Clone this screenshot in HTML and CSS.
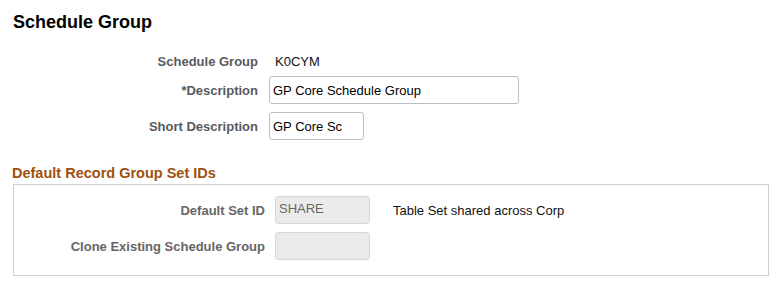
FILE: index.html
```html
<!DOCTYPE html>
<html>
<head>
    <meta charset="utf-8" />
    <title>Schedule Group</title>
    <link rel="stylesheet" href="styles.css">
</head>
<body>
    <div class="page">
        <h1 class="titel">Schedule Group</h1>

        <div class="urlap">
            <div class="sor sor-elso">
                <label class="cimke">Schedule Group</label>
                <span class="ertek">K0CYM</span>
            </div>
            <div class="sor">
                <label class="cimke" for="descr">*Description</label>
                <input id="descr" class="mezo mezo-hosszu" type="text" value="GP Core Schedule Group" />
            </div>
            <div class="sor sor-utolso">
                <label class="cimke" for="shortDescr">Short Description</label>
                <input id="shortDescr" class="mezo mezo-rovid" type="text" value="GP Core Sc" />
            </div>
        </div>

        <h2 class="alcim">Default Record Group Set IDs</h2>
        <div class="doboz">
            <div class="doboz-sor">
                <label class="cimke cimke-halvany">Default Set ID</label>
                <input class="mezo mezo-rovid tiltott" type="text" value="SHARE" disabled />
                <span class="leiras">Table Set shared across Corp</span>
            </div>
            <div class="doboz-sor">
                <label class="cimke cimke-halvany">Clone Existing Schedule Group</label>
                <input class="mezo mezo-rovid tiltott" type="text" value="" disabled />
                <span class="leiras"></span>
            </div>
        </div>
    </div>
</body>
</html>
```

FILE: styles.css
```css
* {
    margin: 0;
    padding: 0;
    box-sizing: border-box;
}

body {
    font-family: "Liberation Sans", Arial, sans-serif;
    font-size: 13px;
    color: #000;
    background: #fff;
}

.page {
    width: 782px;
    height: 289px;
    overflow: hidden;
}

.titel {
    font-size: 18px;
    line-height: 21px;
    font-weight: bold;
    margin: 12px 0 0 13px;
}

.urlap {
    margin-top: 17px;
}

.sor {
    display: grid;
    grid-template-columns: 258px auto;
    column-gap: 11px;
    align-items: center;
    height: 28px;
}

.sor-elso {
    height: 22px;
    margin-bottom: 4px;
}

.sor-utolso {
    margin-top: 8px;
}

.cimke {
    font-weight: bold;
    color: #575a5f;
    text-align: right;
    line-height: 15px;
}

.cimke-halvany {
    color: #666;
}

.ertek {
    padding-left: 6px;
    color: #111;
}

.mezo {
    height: 28px;
    border: 1px solid #b8bfc6;
    border-radius: 3px;
    padding: 0 3px;
    font-family: "Liberation Sans", Arial, sans-serif;
    font-size: 13px;
    color: #000;
    background: #fff;
    outline: none;
}

.mezo-hosszu {
    width: 250px;
}

.mezo-rovid {
    width: 95px;
}

.tiltott {
    background: #ebebeb;
    border-color: #d8d8d8;
    color: #666;
    padding-top: 0;
    padding-bottom: 4px;
}

.alcim {
    font-size: 14.5px;
    line-height: 17px;
    font-weight: bold;
    color: #a0500e;
    margin: 25px 0 2px 12px;
}

.doboz {
    width: 756px;
    margin-left: 13px;
    border: 1px solid #ccd1d7;
    padding: 11px 0 15px 0;
    display: flex;
    flex-direction: column;
    gap: 8px;
}

.doboz-sor {
    display: grid;
    grid-template-columns: 251px 95px auto;
    column-gap: 10px;
    align-items: center;
    height: 28px;
}

.leiras {
    margin-left: 13px;
    color: #111;
}
```
